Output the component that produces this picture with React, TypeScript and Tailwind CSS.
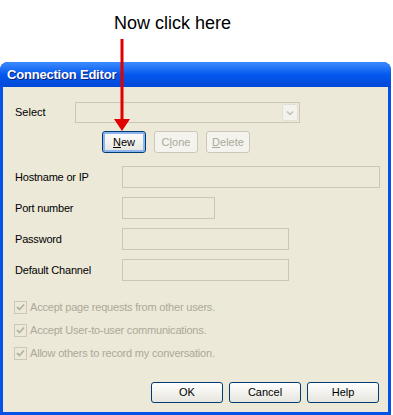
import React from "react";

const font = { fontFamily: '"Liberation Sans", Arial, sans-serif' };

const Field = ({ label, width }: { label: string; width: string }) => (
  <div className="flex items-center h-[22px]">
    <span className="w-[107px] text-[11px] tracking-[-0.2px] text-black">{label}</span>
    <div className={`h-[22px] ${width} border border-[#c9c7ba] bg-[#ece9d8]`} />
  </div>
);

const Check = ({ label }: { label: string }) => (
  <div className="flex items-center h-[13px] gap-[3px]">
    <div className="w-[13px] h-[13px] border border-[#cac8bb] bg-[#ece9d8] flex items-center justify-center">
      <svg width="9" height="9" viewBox="0 0 9 9">
        <path d="M1 4 L3.5 6.5 L8 1.5" fill="none" stroke="#b5b2a3" strokeWidth="1.8" />
      </svg>
    </div>
    <span className="text-[11px] tracking-[-0.2px] text-[#aca899]">{label}</span>
  </div>
);

const XpButton = ({
  children,
  disabled,
  focused,
  className,
}: {
  children: React.ReactNode;
  disabled?: boolean;
  focused?: boolean;
  className: string;
}) => (
  <div
    className={`${className} flex items-center justify-center rounded-[3px] border text-[11px] ${
      disabled
        ? "border-[#cac8bb] bg-[#f4f3ee] text-[#aca899]"
        : "border-[#003c74] bg-gradient-to-b from-white to-[#e6e5de] text-black"
    } ${focused ? "shadow-[inset_0_0_0_2px_#8eb4ef]" : ""}`}
  >
    {children}
  </div>
);

const App = () => {
  return (
    <div className="relative w-[393px] h-[415px] bg-white overflow-hidden" style={font}>
      <div className="h-[62px] flex justify-center pt-[12px] pr-[48px]">
        <span className="text-[18px] text-black leading-[22px]">Now click here</span>
      </div>

      <div className="w-[391px] h-[353px] rounded-t-[8px] bg-[#0452e6] flex flex-col px-[3px] pb-[3px]">
        <div className="h-[25px] -mx-[3px] rounded-t-[8px] bg-gradient-to-b from-[#3b8cfe] via-[#0458ee] to-[#0148d8] flex items-center pl-[7px]">
          <span className="text-[13px] font-bold text-white tracking-[-0.2px] [text-shadow:1px_1px_0_#0a1e80]">
            Connection Editor
          </span>
        </div>
        <div className="flex-1 bg-[#ece9d8] pl-[12px] pt-[15px] flex flex-col">
          <div className="flex items-center h-[21px]">
            <span className="w-[60px] text-[11px] text-black">Select</span>
            <div className="relative w-[225px] h-[21px] border border-[#c9c7ba] bg-[#ece9d8]">
              <div className="absolute right-[1px] top-[1px] w-[16px] h-[17px] rounded-[2px] border border-[#e3e1d6] bg-[#f3f2ec] flex items-center justify-center">
                <svg width="8" height="6" viewBox="0 0 8 6">
                  <path d="M1 1.5 L4 4.5 L7 1.5" fill="none" stroke="#c3c1b3" strokeWidth="1.5" />
                </svg>
              </div>
            </div>
          </div>

          <div className="flex gap-[8px] ml-[87px] mt-[8px]">
            <XpButton className="w-[44px] h-[22px]" focused>
              <span>
                <span className="underline">N</span>ew
              </span>
            </XpButton>
            <XpButton className="w-[44px] h-[22px]" disabled>
              <span>
                C<span className="underline">l</span>one
              </span>
            </XpButton>
            <XpButton className="w-[44px] h-[22px]" disabled>
              <span>
                <span className="underline">D</span>elete
              </span>
            </XpButton>
          </div>

          <div className="flex flex-col gap-[9px] mt-[13px]">
            <Field label="Hostname or IP" width="w-[258px]" />
            <Field label="Port number" width="w-[93px]" />
            <Field label="Password" width="w-[167px]" />
            <Field label="Default Channel" width="w-[167px]" />
          </div>

          <div className="flex flex-col gap-[10px] mt-[20px] -ml-[1px]">
            <Check label="Accept page requests from other users." />
            <Check label="Accept User-to-user communications." />
            <Check label="Allow others to record my conversation." />
          </div>

          <div className="flex gap-[6px] justify-end pr-[9px] mt-[22px]">
            <XpButton className="w-[72px] h-[21px]">OK</XpButton>
            <XpButton className="w-[72px] h-[21px]">Cancel</XpButton>
            <XpButton className="w-[72px] h-[21px]">Help</XpButton>
          </div>
        </div>
      </div>

      <svg className="absolute left-[112px] top-[39px]" width="20" height="93" viewBox="0 0 20 93">
        <rect x="8.5" y="0" width="3" height="82" fill="#e10000" />
        <path d="M2 80 L18 80 L10 92 Z" fill="#e10000" />
      </svg>
    </div>
  );
};

export default App;
